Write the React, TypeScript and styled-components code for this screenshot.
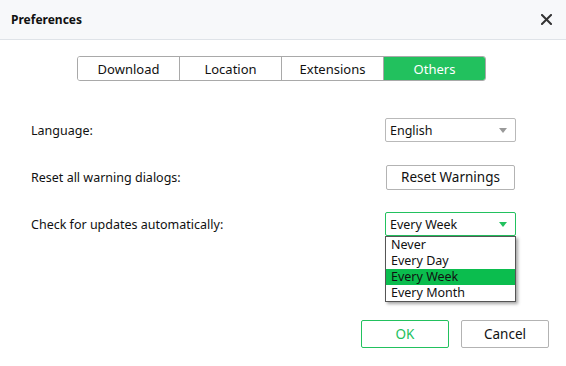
import styled, { createGlobalStyle } from "styled-components";

const GlobalStyle = createGlobalStyle`
  html, body {
    margin: 0;
    padding: 0;
    background: #ffffff;
  }
  body {
    font-family: "Noto Sans", "Liberation Sans", sans-serif;
    color: #111;
  }
`;

const Dialog = styled.div`
  width: 566px;
  height: 366px;
  background: #fff;
  display: flex;
  flex-direction: column;
  overflow: hidden;
`;

const TitleBar = styled.div`
  height: 40px;
  box-sizing: border-box;
  border-bottom: 1px solid #dfe3e8;
  background: #f7f8fa;
  display: flex;
  align-items: center;
  justify-content: space-between;
  padding: 0 14px 0 11px;
`;

const Title = styled.div`
  font-size: 12px;
  font-weight: 700;
  color: #111;
  padding-bottom: 1px;
`;

const CloseButton = styled.div`
  width: 11px;
  height: 11px;
  display: flex;
  cursor: pointer;
`;

const TabRow = styled.div`
  display: flex;
  justify-content: center;
  padding: 16px 3px 0 0;
`;

const TabGroup = styled.div`
  display: flex;
  border: 1px solid #a9a9a9;
  border-radius: 3px;
  overflow: hidden;
`;

const Tab = styled.div<{ $active?: boolean }>`
  width: 101px;
  height: 23px;
  display: flex;
  align-items: center;
  justify-content: center;
  font-size: 13px;
  color: ${(p) => (p.$active ? "#fff" : "#111")};
  background: ${(p) => (p.$active ? "#22c15e" : "#fff")};
  & + & {
    border-left: 1px solid #a9a9a9;
  }
`;

const Body = styled.div`
  display: flex;
  flex-direction: column;
  padding: 37px 50px 0 31px;
  gap: 23px;
`;

const Row = styled.div`
  display: flex;
  align-items: center;
  justify-content: space-between;
  height: 24px;
  position: relative;
`;

const Label = styled.div`
  font-size: 12.5px;
  color: #111;
`;

const Select = styled.div<{ $focused?: boolean }>`
  width: 131px;
  height: 24px;
  box-sizing: border-box;
  border: 1px solid ${(p) => (p.$focused ? "#22c15e" : "#b9b9b9")};
  border-radius: 2px;
  display: flex;
  align-items: center;
  justify-content: space-between;
  padding: 0 8px 0 4px;
  font-size: 12.5px;
  background: #fff;
`;

const Arrow = styled.span<{ $color: string }>`
  width: 0;
  height: 0;
  border-left: 4px solid transparent;
  border-right: 4px solid transparent;
  border-top: 5px solid ${(p) => p.$color};
`;

const PlainButton = styled.button`
  width: 129px;
  height: 25px;
  margin-right: 1px;
  box-sizing: border-box;
  border: 1px solid #b3b3b3;
  border-radius: 2px;
  background: #fff;
  font-family: inherit;
  font-size: 13.5px;
  color: #111;
  padding: 0;
`;

const DropList = styled.div`
  position: absolute;
  right: 0;
  top: 24px;
  width: 131px;
  box-sizing: border-box;
  border: 1px solid #555;
  background: #fff;
  box-shadow: 2px 2px 3px rgba(0, 0, 0, 0.35);
  z-index: 2;
`;

const DropItem = styled.div<{ $selected?: boolean }>`
  height: 16px;
  line-height: 16px;
  padding-left: 5px;
  font-size: 12.5px;
  color: #111;
  background: ${(p) => (p.$selected ? "#0bbd4e" : "transparent")};
`;

const Footer = styled.div`
  margin-top: auto;
  display: flex;
  justify-content: flex-end;
  gap: 12px;
  padding: 0 17px 18px 0;
`;

const FooterButton = styled.button<{ $primary?: boolean }>`
  width: 88px;
  height: 28px;
  box-sizing: border-box;
  border: 1px solid ${(p) => (p.$primary ? "#22c15e" : "#b3b3b3")};
  border-radius: 2px;
  background: #fff;
  font-family: inherit;
  font-size: 13.5px;
  color: ${(p) => (p.$primary ? "#22c15e" : "#111")};
  padding: 0;
`;

const tabs = ["Download", "Location", "Extensions", "Others"];
const frequencies = ["Never", "Every Day", "Every Week", "Every Month"];

export default function App() {
  return (
    <>
      <GlobalStyle />
      <Dialog>
        <TitleBar>
          <Title>Preferences</Title>
          <CloseButton>
            <svg width="11" height="11" viewBox="0 0 11 11">
              <path
                d="M1 1 L10 10 M10 1 L1 10"
                stroke="#333"
                strokeWidth="2"
                strokeLinecap="square"
              />
            </svg>
          </CloseButton>
        </TitleBar>
        <TabRow>
          <TabGroup>
            {tabs.map((t) => (
              <Tab key={t} $active={t === "Others"}>
                {t}
              </Tab>
            ))}
          </TabGroup>
        </TabRow>
        <Body>
          <Row>
            <Label>Language:</Label>
            <Select>
              English
              <Arrow $color="#999" />
            </Select>
          </Row>
          <Row>
            <Label>Reset all warning dialogs:</Label>
            <PlainButton>Reset Warnings</PlainButton>
          </Row>
          <Row>
            <Label>Check for updates automatically:</Label>
            <Select $focused>
              Every Week
              <Arrow $color="#22c15e" />
            </Select>
            <DropList>
              {frequencies.map((f) => (
                <DropItem key={f} $selected={f === "Every Week"}>
                  {f}
                </DropItem>
              ))}
            </DropList>
          </Row>
        </Body>
        <Footer>
          <FooterButton $primary>OK</FooterButton>
          <FooterButton>Cancel</FooterButton>
        </Footer>
      </Dialog>
    </>
  );
}
